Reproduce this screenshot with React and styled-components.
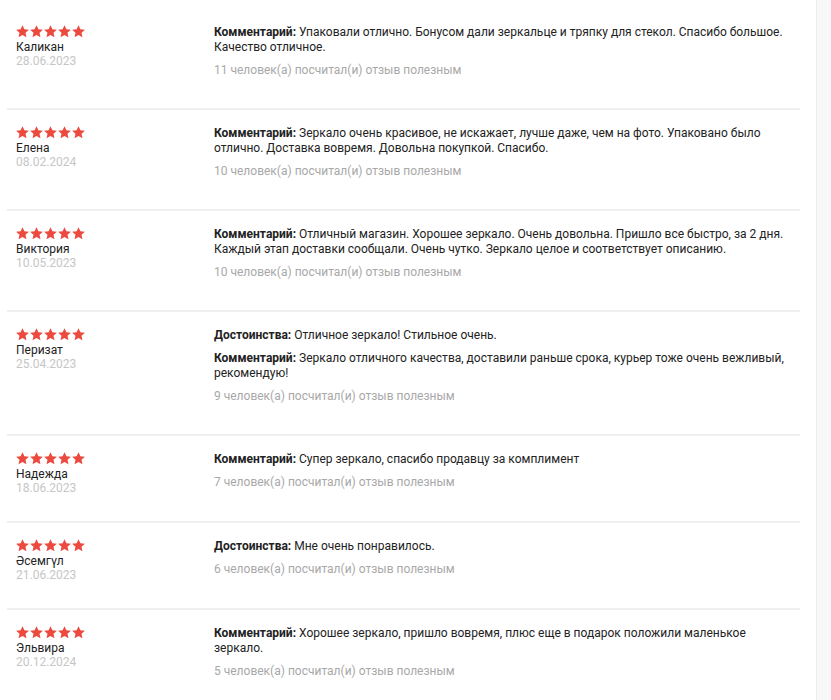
import React from "react";
import styled, { createGlobalStyle } from "styled-components";

const GlobalStyle = createGlobalStyle`
  html, body {
    margin: 0;
    padding: 0;
    background: #ffffff;
  }
  body {
    font-family: Roboto, "Noto Sans", "Liberation Sans", sans-serif;
    color: #222;
  }
`;

const Page = styled.div`
  display: flex;
  width: 831px;
  height: 700px;
  overflow: hidden;
  background: #fff;
`;

const Main = styled.div`
  width: 816px;
  flex-shrink: 0;
  padding-top: 9px;
`;

const Strip = styled.div`
  flex: 1;
  background: #f8f8f8;
  border-left: 1px solid #ececec;
`;

const List = styled.div`
  margin-left: 7px;
  width: 793px;
`;

const Review = styled.div`
  display: flex;
  align-items: flex-start;
  padding: 16px 0 30px 9px;
  border-bottom: 2px solid #efefef;
`;

const Author = styled.div`
  width: 198px;
  flex-shrink: 0;
  display: flex;
  flex-direction: column;
  margin-bottom: -4px;
`;

const Stars = styled.div`
  display: flex;
  gap: 1px;
  height: 13px;
  margin-bottom: 2px;
`;

const Name = styled.div`
  font-size: 12px;
  line-height: 14px;
  color: #222;
`;

const Date = styled.div`
  font-size: 12px;
  line-height: 14px;
  color: #c6c6c6;
`;

const Body = styled.div`
  flex: 1;
  padding-right: 6px;
`;

const Para = styled.p`
  margin: 0 0 8px;
  font-size: 12px;
  line-height: 15px;
  color: #222;

  b {
    font-weight: 700;
  }
`;

const Helpful = styled.div`
  font-size: 12px;
  line-height: 15px;
  color: #a8a8a8;
`;

const Star = () => (
  <svg width="13" height="13" viewBox="1 1.5 22 21">
    <path
      d="M12 1.5l3.2 6.9 7.6.8-5.7 5.1 1.6 7.6L12 18l-6.7 3.9 1.6-7.6-5.7-5.1 7.6-.8z"
      fill="#ec4a3f"
    />
  </svg>
);

const reviews = [
  {
    name: "Каликан",
    date: "28.06.2023",
    parts: [["Комментарий", "Упаковали отлично. Бонусом дали зеркальце и тряпку для стекол. Спасибо большое. Качество отличное."]],
    helpful: 11,
  },
  {
    name: "Елена",
    date: "08.02.2024",
    parts: [["Комментарий", "Зеркало очень красивое, не искажает, лучше даже, чем на фото. Упаковано было отлично. Доставка вовремя. Довольна покупкой. Спасибо."]],
    helpful: 10,
  },
  {
    name: "Виктория",
    date: "10.05.2023",
    parts: [["Комментарий", "Отличный магазин. Хорошее зеркало. Очень довольна. Пришло все быстро, за 2 дня. Каждый этап доставки сообщали. Очень чутко. Зеркало целое и соответствует описанию."]],
    helpful: 10,
  },
  {
    name: "Перизат",
    date: "25.04.2023",
    parts: [
      ["Достоинства", "Отличное зеркало! Стильное очень."],
      ["Комментарий", "Зеркало отличного качества, доставили раньше срока, курьер тоже очень вежливый, рекомендую!"],
    ],
    helpful: 9,
  },
  {
    name: "Надежда",
    date: "18.06.2023",
    parts: [["Комментарий", "Супер зеркало, спасибо продавцу за комплимент"]],
    helpful: 7,
  },
  {
    name: "Әсемгүл",
    date: "21.06.2023",
    parts: [["Достоинства", "Мне очень понравилось."]],
    helpful: 6,
  },
  {
    name: "Эльвира",
    date: "20.12.2024",
    parts: [["Комментарий", "Хорошее зеркало, пришло вовремя, плюс еще в подарок положили маленькое зеркало."]],
    helpful: 5,
  },
];

export default function App() {
  return (
    <Page>
      <GlobalStyle />
      <Main>
        <List>
          {reviews.map((r) => (
            <Review key={r.name}>
              <Author>
                <Stars>
                  {[0, 1, 2, 3, 4].map((i) => (
                    <Star key={i} />
                  ))}
                </Stars>
                <Name>{r.name}</Name>
                <Date>{r.date}</Date>
              </Author>
              <Body>
                {r.parts.map(([label, text]) => (
                  <Para key={label}>
                    <b>{label}:</b> {text}
                  </Para>
                ))}
                <Helpful>{r.helpful} человек(а) посчитал(и) отзыв полезным</Helpful>
              </Body>
            </Review>
          ))}
        </List>
      </Main>
      <Strip />
    </Page>
  );
}
